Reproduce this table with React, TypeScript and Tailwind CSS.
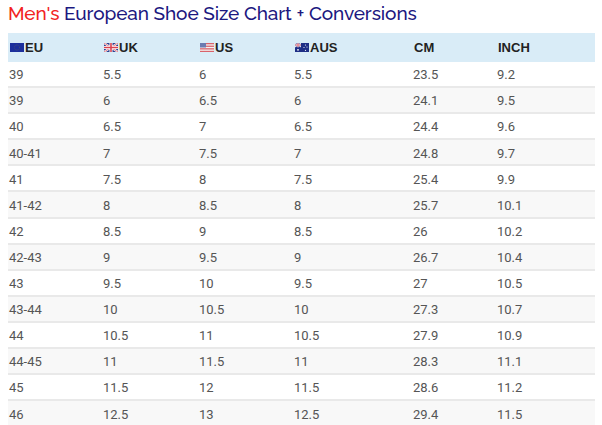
import React from 'react';

const rows: string[][] = [
  ['39', '5.5', '6', '5.5', '23.5', '9.2'],
  ['39', '6', '6.5', '6', '24.1', '9.5'],
  ['40', '6.5', '7', '6.5', '24.4', '9.6'],
  ['40-41', '7', '7.5', '7', '24.8', '9.7'],
  ['41', '7.5', '8', '7.5', '25.4', '9.9'],
  ['41-42', '8', '8.5', '8', '25.7', '10.1'],
  ['42', '8.5', '9', '8.5', '26', '10.2'],
  ['42-43', '9', '9.5', '9', '26.7', '10.4'],
  ['43', '9.5', '10', '9.5', '27', '10.5'],
  ['43-44', '10', '10.5', '10', '27.3', '10.7'],
  ['44', '10.5', '11', '10.5', '27.9', '10.9'],
  ['44-45', '11', '11.5', '11', '28.3', '11.1'],
  ['45', '11.5', '12', '11.5', '28.6', '11.2'],
  ['46', '12.5', '13', '12.5', '29.4', '11.5'],
];

const widths = ['w-[94px]', 'w-[96px]', 'w-[95px]', 'w-[119px]', 'w-[84px]', 'w-[99px]'];

function EuFlag() {
  return (
    <svg width="14" height="9" viewBox="0 0 14 9" className="mr-px">
      <rect width="14" height="9" fill="#1d2f9c" />
      <circle cx="7" cy="4.5" r="2.6" fill="none" stroke="#6d6a4a" strokeWidth="0.6" strokeDasharray="0.6 0.8" />
    </svg>
  );
}

function UkFlag() {
  return (
    <svg width="14" height="9" viewBox="0 0 14 9" className="mr-px">
      <rect width="14" height="9" fill="#2b3f8f" />
      <path d="M0 0L14 9M14 0L0 9" stroke="#fff" strokeWidth="2" />
      <path d="M0 0L14 9M14 0L0 9" stroke="#d9414f" strokeWidth="0.7" />
      <path d="M7 0V9M0 4.5H14" stroke="#fff" strokeWidth="3" />
      <path d="M7 0V9M0 4.5H14" stroke="#d9414f" strokeWidth="1.6" />
    </svg>
  );
}

function UsFlag() {
  return (
    <svg width="14" height="9" viewBox="0 0 14 9" className="mr-px">
      <rect width="14" height="9" fill="#f3f3f3" />
      <rect y="0" width="14" height="1.3" fill="#d9636b" />
      <rect y="2.6" width="14" height="1.3" fill="#d9636b" />
      <rect y="5.2" width="14" height="1.3" fill="#d9636b" />
      <rect y="7.8" width="14" height="1.2" fill="#d9636b" />
      <rect width="6" height="4.5" fill="#6c7bb0" />
    </svg>
  );
}

function AuFlag() {
  return (
    <svg width="14" height="9" viewBox="0 0 14 9" className="mr-px">
      <rect width="14" height="9" fill="#1f2f86" />
      <path d="M0 0L6 4M6 0L0 4" stroke="#fff" strokeWidth="1" />
      <path d="M3 0V4.3M0 2H6" stroke="#fff" strokeWidth="1.4" />
      <path d="M3 0V4.3M0 2H6" stroke="#d9414f" strokeWidth="0.7" />
      <circle cx="3" cy="6.8" r="0.9" fill="#fff" />
      <circle cx="10.5" cy="2" r="0.6" fill="#fff" />
      <circle cx="9" cy="4.5" r="0.6" fill="#fff" />
      <circle cx="12" cy="4" r="0.6" fill="#fff" />
      <circle cx="10.5" cy="7.3" r="0.6" fill="#fff" />
    </svg>
  );
}

const headers: { label: string; flag?: React.ReactNode }[] = [
  { label: 'EU', flag: <EuFlag /> },
  { label: 'UK', flag: <UkFlag /> },
  { label: 'US', flag: <UsFlag /> },
  { label: 'AUS', flag: <AuFlag /> },
  { label: 'CM' },
  { label: 'INCH' },
];

export default function App() {
  return (
    <div className="w-[602px] h-[425px] overflow-hidden bg-white pl-2 pr-[7px]">
      <h1 className="h-[33px] pt-[1px] text-[19px] leading-[24px] tracking-[-0.1px] font-medium font-['Raleway','Lato','Noto_Sans',sans-serif] text-[#1c1880]">
        <span className="text-[#f2231f]">Men's</span> European Shoe Size Chart + Conversions
      </h1>
      <div className="flex h-[29px] items-center bg-[#d9ecf7] font-['Liberation_Sans',Arial,sans-serif] text-[13px] font-bold text-[#222]">
        {headers.map((h, i) => (
          <div key={h.label} className={`${widths[i]} flex items-center ${i >= 4 ? 'pl-[2px]' : 'pl-[2px]'}`}>
            {h.flag}
            <span>{h.label}</span>
          </div>
        ))}
      </div>
      <div className="font-['Roboto','Liberation_Sans',sans-serif] text-[13px] text-[#555]">
        {rows.map((r, ri) => (
          <div
            key={ri}
            className={`flex h-[26.1px] items-center pt-[2px] border-b-2 border-[#e9e9e9] ${ri % 2 === 1 ? 'bg-[#f8f8f8]' : 'bg-white'}`}
          >
            {r.map((c, ci) => (
              <div key={ci} className={`${widths[ci]} pl-[1px]`}>
                {c}
              </div>
            ))}
          </div>
        ))}
      </div>
    </div>
  );
}
